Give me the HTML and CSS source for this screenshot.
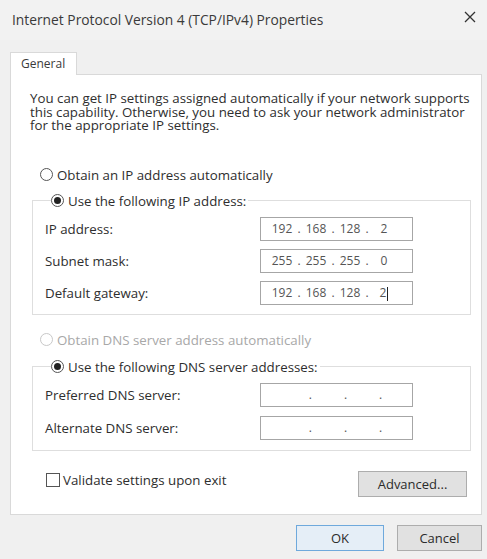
FILE: index.html
```html
<!DOCTYPE html>
<html lang="en">
<head>
    <meta charset="UTF-8">
    <meta name="viewport" content="width=device-width, initial-scale=1.0">
    <title>Internet Protocol Version 4 (TCP/IPv4) Properties</title>
    <link rel="stylesheet" href="styles.css">
</head>
<body>
    <div class="dialog">
        <div class="titlebar">
            <span class="title">Internet Protocol Version 4 (TCP/IPv4) Properties</span>
            <span class="close">
                <svg width="12" height="12" viewBox="0 0 12 12">
                    <path d="M1 1 L11 11 M11 1 L1 11" stroke="#333" stroke-width="1.3" fill="none"/>
                </svg>
            </span>
        </div>

        <div class="tabs">
            <div class="tab">General</div>
        </div>

        <div class="panel">
            <p class="desc">You can get IP settings assigned automatically if your network supports this capability. Otherwise, you need to ask your network administrator for the appropriate IP settings.</p>

            <div class="radio-row first-radio">
                <span class="radio"></span>
                <span>Obtain an IP address automatically</span>
            </div>

            <fieldset class="group ip-group">
                <legend class="radio-row">
                    <span class="radio checked"></span>
                    <span>Use the following IP address:</span>
                </legend>
                <div class="field-row">
                    <span class="field-label">IP address:</span>
                    <div class="ip-box">
                        <span class="seg">192</span><span class="dot">.</span><span class="seg">168</span><span class="dot">.</span><span class="seg">128</span><span class="dot">.</span><span class="seg">2</span>
                    </div>
                </div>
                <div class="field-row">
                    <span class="field-label">Subnet mask:</span>
                    <div class="ip-box">
                        <span class="seg">255</span><span class="dot">.</span><span class="seg">255</span><span class="dot">.</span><span class="seg">255</span><span class="dot">.</span><span class="seg">0</span>
                    </div>
                </div>
                <div class="field-row">
                    <span class="field-label">Default gateway:</span>
                    <div class="ip-box">
                        <span class="seg">192</span><span class="dot">.</span><span class="seg">168</span><span class="dot">.</span><span class="seg">128</span><span class="dot">.</span><span class="seg">2<span class="caret"></span></span>
                    </div>
                </div>
            </fieldset>

            <div class="radio-row disabled dns-auto">
                <span class="radio"></span>
                <span>Obtain DNS server address automatically</span>
            </div>

            <fieldset class="group dns-group">
                <legend class="radio-row">
                    <span class="radio checked"></span>
                    <span>Use the following DNS server addresses:</span>
                </legend>
                <div class="field-row">
                    <span class="field-label">Preferred DNS server:</span>
                    <div class="ip-box empty">
                        <span class="seg"></span><span class="dot">.</span><span class="seg"></span><span class="dot">.</span><span class="seg"></span><span class="dot">.</span><span class="seg"></span>
                    </div>
                </div>
                <div class="field-row">
                    <span class="field-label">Alternate DNS server:</span>
                    <div class="ip-box empty">
                        <span class="seg"></span><span class="dot">.</span><span class="seg"></span><span class="dot">.</span><span class="seg"></span><span class="dot">.</span><span class="seg"></span>
                    </div>
                </div>
            </fieldset>

            <div class="bottom-row">
                <label class="check-row">
                    <span class="checkbox"></span>
                    <span>Validate settings upon exit</span>
                </label>
                <button class="btn advanced">Advanced...</button>
            </div>
        </div>

        <div class="dialog-buttons">
            <button class="btn ok">OK</button>
            <button class="btn cancel">Cancel</button>
        </div>
    </div>
</body>
</html>
```

FILE: styles.css
```css
html, body {
    margin: 0;
    padding: 0;
}

body {
    background-color: #f0f0f0;
    font-family: "Open Sans", "Noto Sans", sans-serif;
    font-size: 13.3px;
    color: #2e2e2e;
}

.dialog {
    width: 487px;
    height: 559px;
    box-sizing: border-box;
    overflow: hidden;
}

.titlebar {
    height: 40px;
    display: flex;
    align-items: center;
    justify-content: space-between;
    padding: 0 11px 2px 12px;
    box-sizing: border-box;
    background-color: #f2f2f2;
}

.title {
    color: #3a3a3a;
    font-size: 13.8px;
}

.close {
    display: flex;
    margin-top: -4px;
}

.tabs {
    display: flex;
    padding-left: 10px;
    margin-top: 12px;
}

.tab {
    width: 67px;
    height: 23px;
    box-sizing: border-box;
    background-color: #fff;
    border: 1px solid #d9d9d9;
    border-bottom: none;
    padding: 2px 0 0 10px;
    font-size: 12px;
    color: #3a3a3a;
    margin-bottom: -1px;
    position: relative;
}

.panel {
    margin: 0 5px 0 10px;
    height: 441px;
    box-sizing: border-box;
    background-color: #fff;
    border: 1px solid #d9d9d9;
    padding: 0;
}

.desc {
    margin: 17px 4px 0 19px;
    line-height: 13.5px;
}

.radio-row {
    display: flex;
    align-items: center;
    height: 20px;
    gap: 4px;
}

.first-radio {
    margin: 32px 0 0 29px;
}

.radio {
    width: 13px;
    height: 13px;
    box-sizing: border-box;
    border: 1px solid #555;
    border-radius: 50%;
    display: flex;
    align-items: center;
    justify-content: center;
    background-color: #fff;
}

.radio.checked::after {
    content: "";
    width: 7px;
    height: 7px;
    border-radius: 50%;
    background-color: #222;
}

.disabled {
    color: #a8a8a8;
}

.disabled .radio {
    border-color: #c8c8c8;
}

.group {
    border: 1px solid #dedede;
    margin: 0 10px 0 21px;
    padding: 0 0 0 12px;
}

.group legend {
    padding: 0 2px 0 0;
    margin-left: 6px;
}

.ip-group {
    margin-top: 6px;
    padding-top: 6px;
    padding-bottom: 9px;
}

.dns-group {
    margin-top: 7px;
    padding-top: 6px;
    padding-bottom: 10px;
}

.dns-auto {
    margin: 15px 0 0 29px;
}

.field-row {
    display: flex;
    align-items: center;
    height: 24px;
    margin-bottom: 8px;
}

.dns-group .field-row {
    margin-bottom: 9px;
}

.field-row:last-child {
    margin-bottom: 0;
}

.field-label {
    width: 215px;
}

.ip-box {
    width: 153px;
    height: 24px;
    box-sizing: border-box;
    border: 1px solid #a6a6a6;
    display: flex;
    align-items: center;
    padding-left: 8px;
    color: #555;
    font-size: 12px;
}

.seg {
    width: 26px;
    text-align: center;
    position: relative;
}

.dot {
    width: 8px;
    text-align: center;
}

.ip-box.empty {
    padding-left: 18px;
}

.ip-box.empty .seg {
    width: 28px;
}

.caret {
    display: inline-block;
    width: 1px;
    height: 14px;
    background-color: #222;
    vertical-align: middle;
    margin-left: 1px;
}

.bottom-row {
    display: flex;
    justify-content: space-between;
    align-items: flex-start;
    margin: 20px 14px 0 35px;
}

.check-row {
    display: flex;
    align-items: center;
    gap: 3px;
    height: 16px;
    margin-top: 1px;
}

.checkbox {
    width: 14px;
    height: 14px;
    box-sizing: border-box;
    border: 1px solid #555;
    background-color: #fff;
}

.btn {
    font-family: inherit;
    font-size: 13px;
    color: #2b2b2b;
    background-color: #e1e1e1;
    border: 1px solid #adadad;
    height: 26px;
    padding: 0;
}

.advanced {
    width: 109px;
}

.dialog-buttons {
    display: flex;
    justify-content: flex-end;
    gap: 13px;
    margin: 10px 5px 0 0;
}

.ok {
    width: 88px;
    border-color: #6fa9dc;
    background-color: #e5eef7;
}

.cancel {
    width: 85px;
}
```
